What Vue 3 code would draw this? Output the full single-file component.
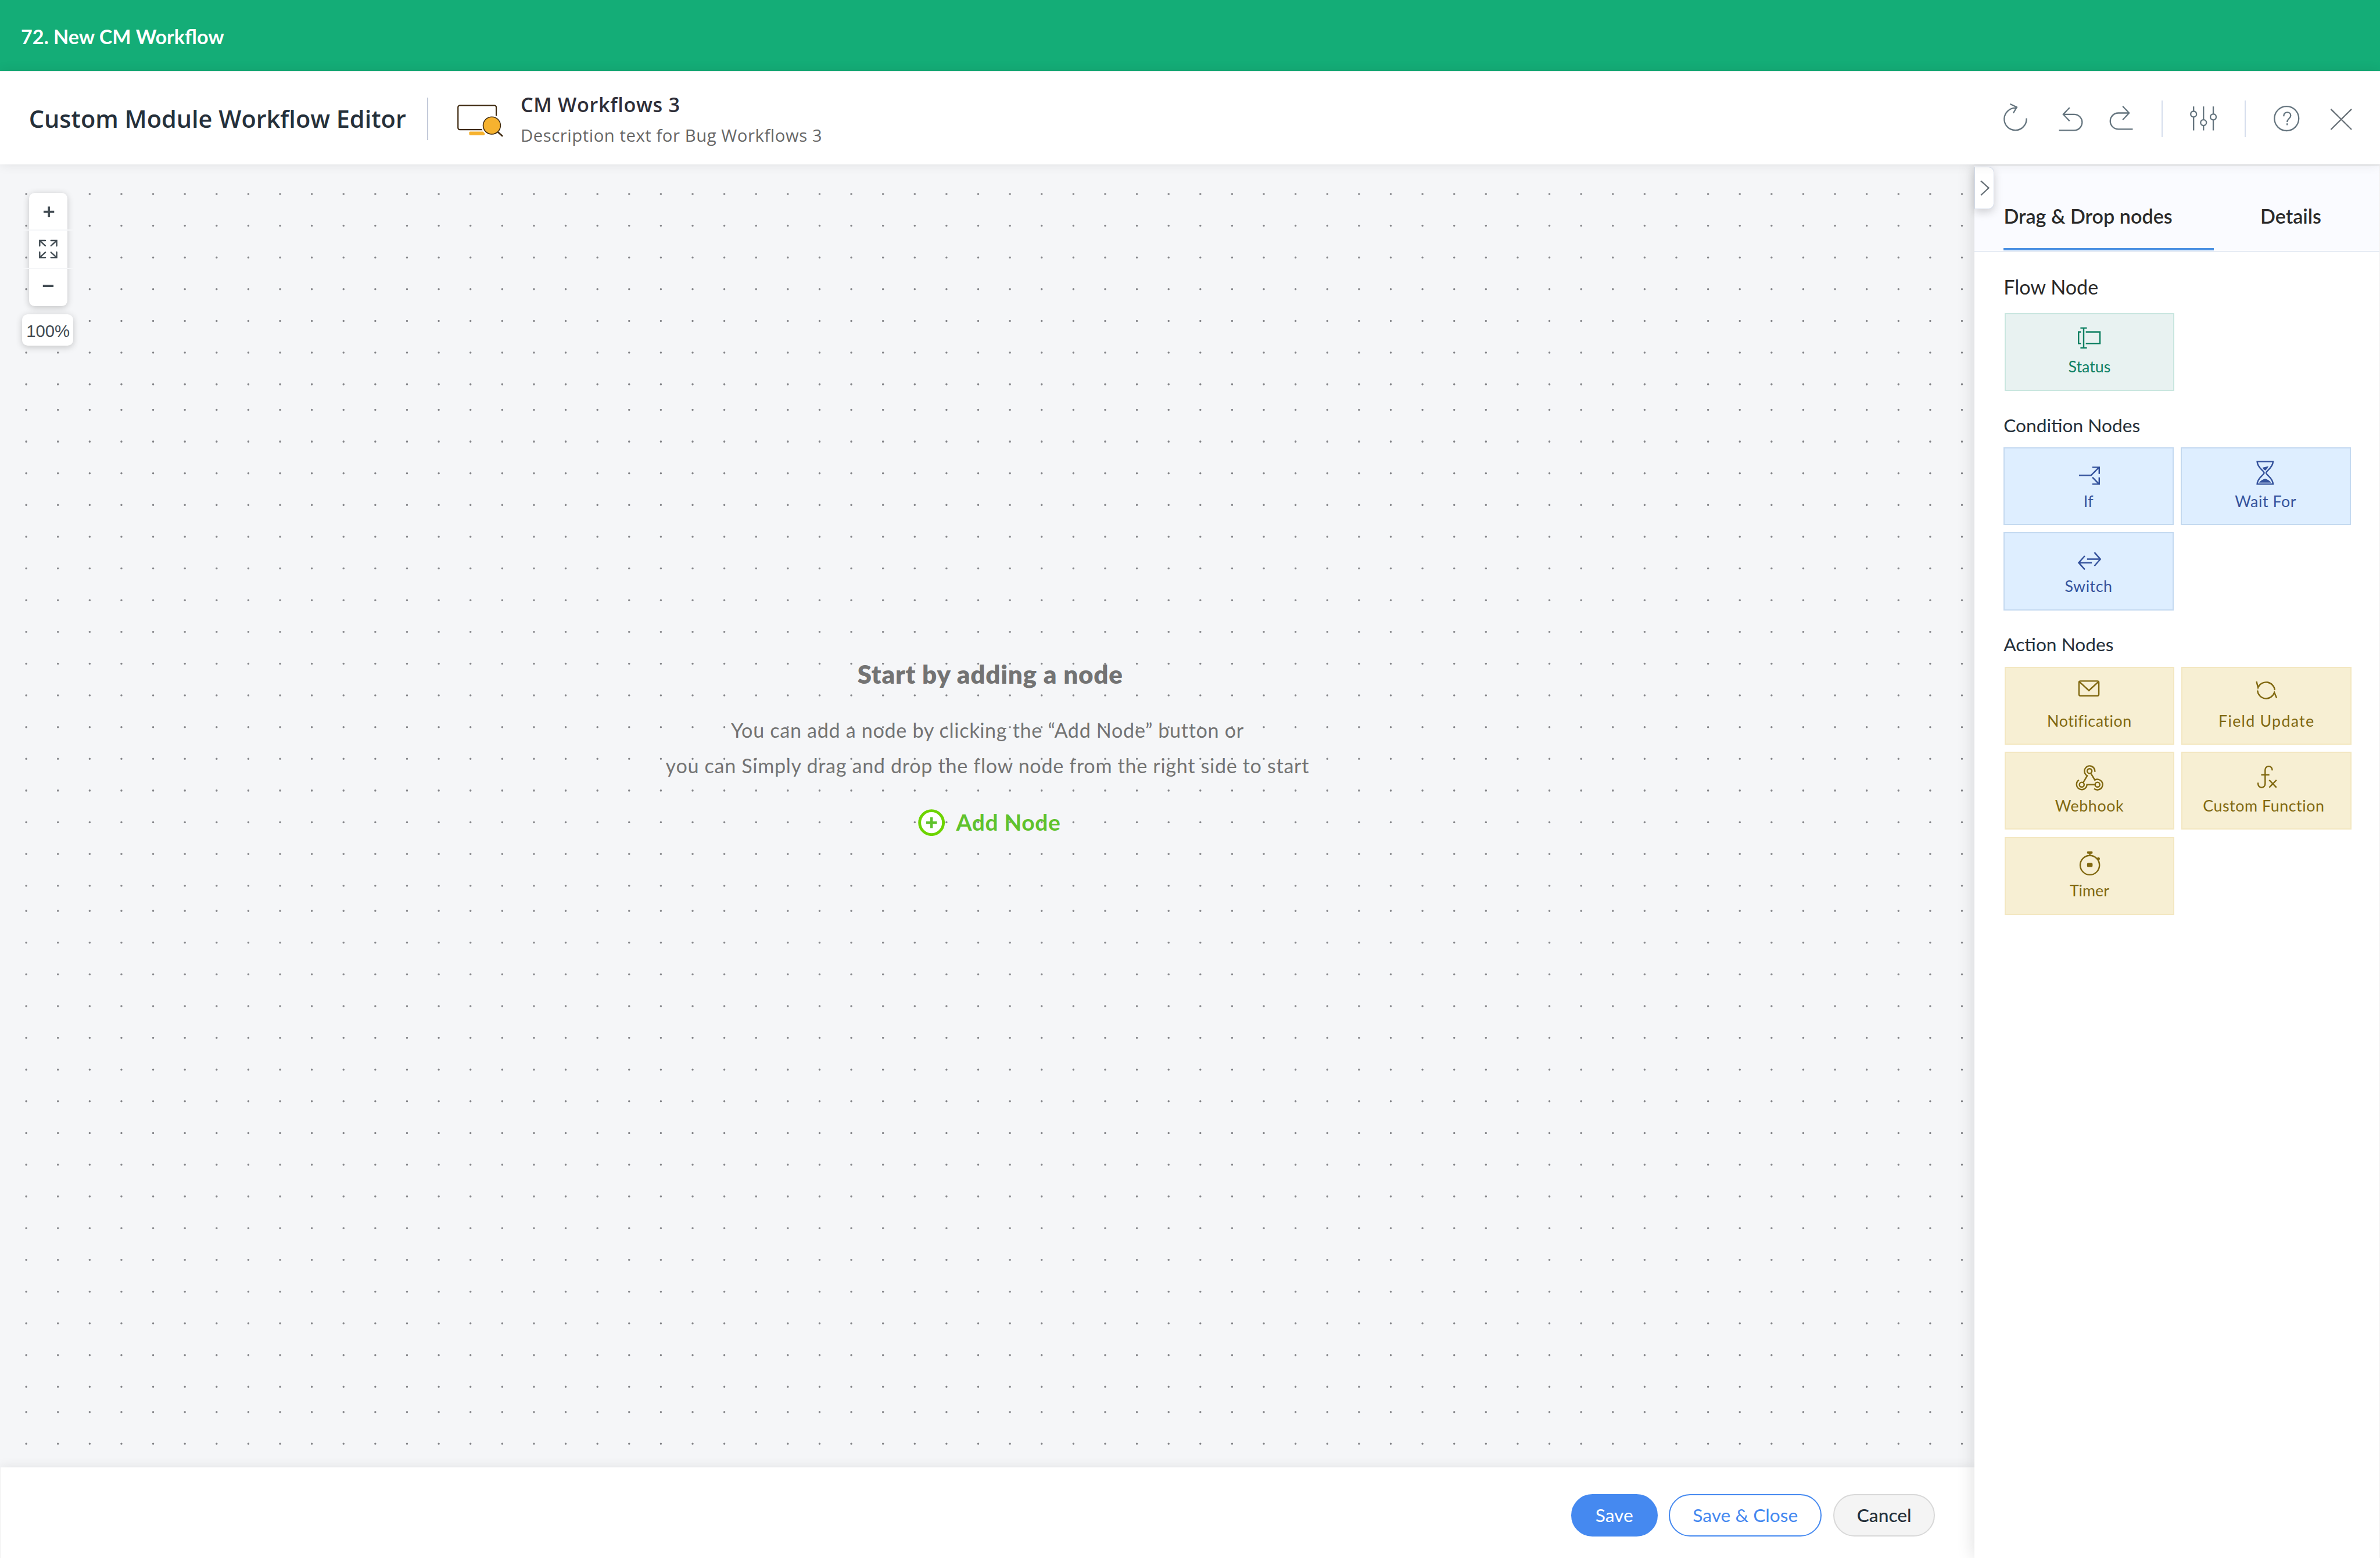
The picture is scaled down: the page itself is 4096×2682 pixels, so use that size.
<script setup>
import { ref, computed } from "vue";

const activeTab = ref("nodes");
const zoom = ref(100);

const tabs = [
    { id: "nodes", label: "Drag & Drop nodes" },
    { id: "details", label: "Details" },
];

const groups = [
    {
        name: "Flow Node",
        kind: "flow",
        nodes: [{ id: "status", label: "Status" }],
    },
    {
        name: "Condition Nodes",
        kind: "condition",
        nodes: [
            { id: "if", label: "If" },
            { id: "wait", label: "Wait For" },
            { id: "switch", label: "Switch" },
        ],
    },
    {
        name: "Action Nodes",
        kind: "action",
        nodes: [
            { id: "notification", label: "Notification" },
            { id: "update", label: "Field Update" },
            { id: "webhook", label: "Webhook" },
            { id: "function", label: "Custom Function" },
            { id: "timer", label: "Timer" },
        ],
    },
];

// the grid repeats in blocks, the last row of a block sits closer to the next one
const blocks = [
    { top: 20.9, rows: 7 },
    { top: 173.3, rows: 16 },
    { top: 527.1, rows: 16 },
    { top: 880.9, rows: 2 },
];

const dotRows = computed(() =>
    blocks.flatMap((b) =>
        Array.from({ length: b.rows }, (_, i) => b.top + i * 22.4),
    ),
);

function changeZoom(step) {
    zoom.value = Math.min(200, Math.max(10, zoom.value + step));
}
</script>

<template>
    <div class="page">
        <div class="banner">72. New CM Workflow</div>

        <header class="header">
            <h1>Custom Module Workflow Editor</h1>
            <span class="divider tall"></span>
            <svg class="logo" viewBox="1280 280 144 112">
                <rect x="1293.5" y="297.5" width="108" height="68" rx="5" fill="#fff" stroke="#3f2a10" stroke-width="3.6" />
                <rect x="1325" y="371" width="44" height="10.5" rx="3" fill="#f6b22f" />
                <circle cx="1389" cy="354" r="30" fill="#fff" />
                <path d="M1407 373L1418 383" stroke="#3f2a10" stroke-width="4.5" stroke-linecap="round" />
                <circle cx="1389" cy="354" r="24.5" fill="#f6b22f" stroke="#3f2a10" stroke-width="2.6" />
            </svg>
            <div class="info">
                <h2>CM Workflows 3</h2>
                <p>Description text for Bug Workflows 3</p>
            </div>

            <div class="tools">
                <svg viewBox="0 0 24 24">
                    <path d="M19.9 11.3A7.85 7.85 0 1 1 12.9 4.1M8.4 1.2L13.1 3.5L10.6 7.7" />
                </svg>
                <svg class="undo" viewBox="0 0 24 24">
                    <path d="M7 8.55H14.6A5.65 5.65 0 0 1 14.6 19.85H3.9M11.4 3.8L6.9 8.55L11.4 13.3" />
                </svg>
                <svg class="redo" viewBox="0 0 24 24">
                    <path d="M17.2 7.6H9.7A5.7 5.7 0 0 0 9.7 19H19.9M12.8 2.9L17.3 7.6L12.8 12.4" />
                </svg>
                <span class="divider"></span>
                <svg class="sliders" viewBox="0 0 24 24">
                    <path d="M5 3V6.3M5 10.5V19.9M12 3V12.3M12 16.5V19.9M18.9 3V8.3M18.9 12.5V19.9" />
                    <circle cx="5" cy="8.4" r="2.05" />
                    <circle cx="12" cy="14.4" r="2.05" />
                    <circle cx="18.9" cy="10.4" r="2.05" />
                </svg>
                <span class="divider second"></span>
                <svg class="help" viewBox="0 0 24 24">
                    <circle cx="12" cy="11.5" r="8.6" />
                    <path d="M10 9.9V9.5C10 8.1 11.1 7.1 12.5 7.1C13.9 7.1 14.9 8.1 14.9 9.4C14.9 11.3 12.4 11.7 12.4 13.9M12.4 14.9V16.2" />
                </svg>
                <svg class="close" viewBox="0 0 24 24">
                    <path d="M4.7 4.9L19.3 19.3M19.3 4.9L4.7 19.3" />
                </svg>
            </div>
        </header>

        <main class="body">
            <div class="left">
                <section class="canvas">
                    <svg class="dots" viewBox="0 0 1393.5 920">
                        <line v-for="y in dotRows" :key="y" x1="18.5" x2="1386" :y1="y" :y2="y" />
                    </svg>

                    <div class="controls">
                        <div class="zoomBox">
                            <button @click="changeZoom(10)">
                                <svg viewBox="0 0 27 26"><path class="bold" d="M10.25 13.4H17.75M14 9.6V17.2" /></svg>
                            </button>
                            <i></i>
                            <button @click="zoom = 100">
                                <svg viewBox="0 0 27 26">
                                    <path
                                        class="arrows"
                                        d="M11.5 7H7.5V10.8M7.7 7.2L11.5 10.7M15.5 7H19.5V10.8M19.3 7.2L15.5 10.7M11.5 19H7.5V15.2M7.7 18.8L11.5 15.3M15.5 19H19.5V15.2M19.3 18.8L15.5 15.3"
                                    />
                                </svg>
                            </button>
                            <i></i>
                            <button @click="changeZoom(-10)">
                                <svg viewBox="0 0 27 26"><path class="bold" d="M9.75 12H17.25" /></svg>
                            </button>
                        </div>
                        <div class="level">{{ zoom }}%</div>
                    </div>

                    <div class="empty">
                        <h3>Start by adding a node</h3>
                        <p>
                            You can add a node by clicking the “Add Node” button or<br />
                            you can Simply drag and drop the flow node from the right side to start
                        </p>
                        <button class="add">
                            <svg viewBox="0 0 19 19">
                                <circle cx="9.5" cy="9.5" r="8.4" />
                                <path d="M5.7 9.5H13.3M9.5 5.7V13.3" />
                            </svg>
                            Add Node
                        </button>
                    </div>
                </section>

                <footer class="footer">
                    <button class="btn save">Save</button>
                    <button class="btn saveClose">Save &amp; Close</button>
                    <button class="btn cancel">Cancel</button>
                </footer>
            </div>

            <aside class="panel">
                <button class="collapse">
                    <svg viewBox="0 0 14 30"><path d="M4.5 10L10.1 15L4.5 20.2" /></svg>
                </button>

                <nav class="tabs">
                    <button
                        v-for="tab in tabs"
                        :key="tab.id"
                        :class="{ active: tab.id === activeTab }"
                        @click="activeTab = tab.id"
                    >
                        {{ tab.label }}
                    </button>
                </nav>

                <div class="groups">
                    <section v-for="group in groups" :key="group.name" :class="group.kind">
                        <h4>{{ group.name }}</h4>
                        <div class="grid">
                            <div v-for="node in group.nodes" :key="node.id" class="node" :class="node.id" draggable="true">
                                <svg viewBox="0 0 40 30">
                                    <path
                                        v-if="node.id === 'status'"
                                        d="M16 10.5V24.5M13.7 10.5h4.6M13.7 24.5h4.6M14.1 13.35H12.4V21.45H14.1M17.5 13.35H27.5V21.45H17.5"
                                    />
                                    <path
                                        v-else-if="node.id === 'if'"
                                        d="M13.1 19.8H21.6L27.2 14.2M22.5 14.1H27.4V18.8M22.6 21.2L27.2 25.9M27.4 21.2V26H22.5"
                                    />
                                    <template v-else-if="node.id === 'wait'">
                                        <path
                                            d="M14.2 10.1H25.4C25.2 14.6 20.5 16.6 20.5 18.05C20.5 19.5 25.2 21.5 25.4 26H14.2C14.4 21.5 19.1 19.5 19.1 18.05C19.1 16.6 14.4 14.6 14.2 10.1Z"
                                        />
                                        <path class="fill" d="M15.6 24.9Q17 22.9 19.8 22.1Q22.6 22.9 24 24.9ZM17.9 14.4L22.2 13.3Q21.5 15.2 19.9 16.4Q18.4 15.6 17.9 14.4Z" />
                                    </template>
                                    <path
                                        v-else-if="node.id === 'switch'"
                                        d="M18.8 18.7H28M24 13.9L28.2 18.7L24 23.5M22.2 21.2H13M17.2 16.4L12.9 21.2L17.2 26"
                                    />
                                    <template v-else-if="node.id === 'notification'">
                                        <rect x="12.7" y="10" width="14" height="10.4" rx="1" />
                                        <path d="M13 10.5L19.7 16.7L26.4 10.5" />
                                    </template>
                                    <path
                                        v-else-if="node.id === 'update'"
                                        d="M12.9 10.3L14 14.6A6.15 6.15 0 0 1 25.8 16.4M13.6 16.6A6.1 6.1 0 0 0 25.5 18.1L27.1 21.9"
                                    />
                                    <g v-else-if="node.id === 'webhook'" class="hook" transform="translate(0 1.75) scale(0.0833)">
                                        <circle cx="242" cy="143" r="20" />
                                        <circle cx="176" cy="258" r="20" />
                                        <circle cx="309" cy="258" r="20" />
                                        <path
                                            d="M287 150A44.5 44.5 0 1 0 222 183L188 240M152 219A44 44 0 1 0 220 258H287M280 292A44.5 44.5 0 1 0 287 219L254 164"
                                        />
                                    </g>
                                    <path
                                        v-else-if="node.id === 'function'"
                                        d="M24 13.2V12.8A2.5 2.5 0 0 0 19 12.8V22.8A2.5 2.5 0 0 1 14 22.8V21.8M16.2 16.3H22M21.9 20L27 25.3M27 20L21.9 25.3"
                                    />
                                    <template v-else>
                                        <circle cx="20.35" cy="19.8" r="6.8" />
                                        <path d="M20.35 11.5V13" />
                                        <rect class="fill" x="18.4" y="10" width="3.9" height="1.8" rx="0.6" />
                                        <circle class="fill" cx="26.4" cy="15.3" r="1.05" />
                                        <rect class="fill" x="18.4" y="18.3" width="3.9" height="2.8" rx="0.7" />
                                    </template>
                                </svg>
                                <span>{{ node.label }}</span>
                            </div>
                        </div>
                    </section>
                </div>
            </aside>
        </main>
    </div>
</template>

<style>
/* 1rem = 10px of the 1680px wide layout */
html {
    font-size: calc(100vw / 168);
}

body {
    margin: 0;
    overflow: hidden;
}
</style>

<style scoped>
* {
    box-sizing: border-box;
    margin: 0;
}

button {
    padding: 0;
    border: none;
    background: none;
    color: inherit;
    font: inherit;
}

svg {
    display: block;
    flex: none;
    fill: none;
}

.page {
    display: flex;
    flex-direction: column;
    height: 100vh;
    background-color: white;
    font-family: "Lato", sans-serif;
}

.banner {
    height: 5rem;
    padding: 0.1rem 0 0 1.48rem;
    background-color: #14ad77;
    color: white;
    font-size: 1.4rem;
    font-weight: 700;
    line-height: 5rem;
}

.header {
    display: flex;
    align-items: center;
    position: relative;
    z-index: 3;
    height: 6.6rem;
    padding: 0.12rem 1.54rem 0 2.04rem;
    border-top: 0.1rem solid #f5f5f5;
    background-color: white;
    box-shadow: 0 0 0.8rem rgba(0, 0, 0, 0.09);
    font-family: "Open Sans", sans-serif;
}

h1 {
    width: 28.11rem;
    padding-bottom: 0.05rem;
    color: #25303a;
    font-size: 1.7rem;
    font-weight: 600;
    white-space: nowrap;
}

.divider {
    width: 0.09rem;
    height: 2.6rem;
    margin-left: 1.6rem;
    background-color: #d5deed;
}

.divider.tall {
    height: 3rem;
    margin-left: 0;
    background-color: #c3cad9;
}

.divider.second {
    margin-left: 1.7rem;
}

.logo {
    width: 3.6rem;
    height: 2.8rem;
    margin: 0 1.15rem 0 1.76rem;
}

.info {
    padding-top: 0.15rem;
}

h2 {
    color: #2e2e38;
    font-size: 1.4rem;
    font-weight: 600;
    line-height: 2rem;
    letter-spacing: 0.029rem;
}

.info p {
    margin-top: 0.17rem;
    color: #666;
    font-size: 1.2rem;
    line-height: 2rem;
    letter-spacing: 0.023rem;
}

.tools {
    display: flex;
    align-items: center;
    margin-left: auto;
}

.tools svg {
    width: 2.4rem;
    height: 2.4rem;
    stroke: #64747e;
    stroke-width: 0.95;
}

.tools .undo {
    margin-left: 1.5rem;
}

.tools .redo {
    margin-left: 1.2rem;
}

.tools .sliders {
    margin-left: 1.7rem;
}

.tools .help {
    margin-left: 1.66rem;
}

.tools .close {
    margin-left: 1.46rem;
    stroke: #666f76;
}

.body {
    display: flex;
    flex: 1;
    min-height: 0;
}

.left {
    display: flex;
    flex-direction: column;
    flex: 1;
}

.canvas {
    position: relative;
    height: 92rem;
    padding-top: 34.8rem;
    background-color: #f5f6f8;
}

.dots {
    position: absolute;
    top: 0;
    left: 0;
    width: 100%;
    height: 100%;
    stroke: #85868a;
    stroke-width: 1.45;
    stroke-linecap: round;
    stroke-dasharray: 0 22.4;
}

.controls {
    position: absolute;
    top: 2rem;
    left: 1.55rem;
    width: 3.6rem;
}

.zoomBox {
    width: 2.7rem;
    margin: 0 0 0.6rem 0.5rem;
    border-radius: 0.4rem;
    background-color: white;
    box-shadow: 0 0.1rem 0.5rem rgba(0, 0, 0, 0.2);
}

.zoomBox button {
    display: block;
}

.zoomBox svg {
    width: 2.7rem;
    height: 2.6rem;
}

.zoomBox i {
    display: block;
    height: 0.1rem;
    margin: 0 -0.4rem;
    background-color: #f5f6f8;
}

.bold {
    stroke: #434d54;
    stroke-width: 1.5;
}

.arrows {
    stroke: #434d54;
    stroke-width: 1;
    stroke-linecap: round;
}

.level {
    height: 2.2rem;
    padding-left: 0.08rem;
    border-radius: 0.4rem;
    background-color: white;
    box-shadow: 0 0.1rem 0.5rem rgba(0, 0, 0, 0.2);
    color: #434d54;
    font: 1.2rem/2.42rem "Liberation Sans", sans-serif;
    text-align: center;
}

.empty {
    display: flex;
    flex-direction: column;
    align-items: center;
    position: relative;
    color: #737373;
    text-align: center;
}

h3 {
    padding-left: 0.45rem;
    font-size: 1.8rem;
    font-weight: 800;
    line-height: 2.4rem;
    letter-spacing: 0.033rem;
}

.empty p {
    margin: 1.53rem 0 1.55rem;
    padding-left: 0.05rem;
    font-size: 1.4rem;
    line-height: 2.49rem;
    letter-spacing: 0.028rem;
}

.add {
    display: flex;
    align-items: center;
    gap: 0.78rem;
    padding-left: 0.33rem;
    color: #5fc22c;
    font-size: 1.6rem;
    font-weight: 700;
    line-height: 2.44rem;
    letter-spacing: 0.024rem;
}

.add svg {
    width: 1.9rem;
    height: 1.9rem;
}

.add circle {
    fill: white;
    stroke: #6dd400;
    stroke-width: 2;
}

.add path {
    stroke: #5fc22c;
    stroke-width: 1.8;
}

.footer {
    display: flex;
    align-items: center;
    justify-content: flex-end;
    flex: 1;
    gap: 0.8rem;
    position: relative;
    padding: 0.35rem 2.75rem 0 0;
    border-left: 0.05rem solid #f1f1f1;
    background-color: white;
    box-shadow: 0 0 0.8rem rgba(0, 0, 0, 0.09);
}

.btn {
    height: 3rem;
    border: 0.1rem solid #4589f0;
    border-radius: 1.5rem;
    font-size: 1.3rem;
}

.save {
    width: 6.1rem;
    background-color: #4589f0;
    color: white;
}

.saveClose {
    width: 10.8rem;
    color: #4589f0;
}

.cancel {
    width: 7.2rem;
    border-color: #d8d8d8;
    background-color: #f4f4f4;
    color: #25303a;
    font-weight: 500;
}

.panel {
    position: relative;
    z-index: 2;
    width: 28.65rem;
    border-top: 0.1rem solid #e4e5e7;
    border-right: 0.05rem solid #f1f1f1;
    background-color: white;
    box-shadow: 0 0 1.2rem rgba(0, 0, 0, 0.14);
}

.collapse {
    position: absolute;
    top: 0.09rem;
    left: 0;
    width: 1.4rem;
    height: 3rem;
    border: 0.05rem solid #d2dbea;
    border-radius: 0 0.4rem 0.4rem 0;
    background-color: white;
    box-shadow: 0 0.2rem 0.6rem rgba(0, 0, 0, 0.18);
}

.collapse svg {
    width: 1.4rem;
    height: 3rem;
    margin: -0.05rem 0 0 -0.03rem;
    stroke: #666f76;
    stroke-width: 0.9;
}

.tabs {
    display: flex;
    align-items: flex-end;
    gap: 3.29rem;
    height: 6.07rem;
    padding: 0 0 0.04rem 2.09rem;
    border-bottom: 0.05rem solid #d5deed;
    background-color: #fafbff;
    color: #2a2a2a;
    font-size: 1.4rem;
    font-weight: 600;
    line-height: 4.45rem;
}

.tabs button {
    border-bottom: 0.2rem solid transparent;
    text-align: left;
}

.tabs .active {
    width: 14.82rem;
    border-color: #4a90e2;
}

.groups {
    display: flex;
    flex-direction: column;
    gap: 1.4rem;
    padding: 1.5rem 0 0 2.08rem;
}

h4 {
    margin-bottom: 0.57rem;
    padding-top: 0.03rem;
    color: #25303a;
    font-size: 1.3rem;
    font-weight: 400;
    line-height: 2rem;
}

.flow h4 {
    margin-bottom: 0.81rem;
    color: #2a2a2a;
    font-size: 1.4rem;
}

.grid {
    display: grid;
    grid-template-columns: 12rem 12rem;
    gap: 0.5rem;
}

.flow .grid,
.action .grid {
    margin-left: 0.06rem;
}

.node {
    display: flex;
    flex-direction: column;
    align-items: center;
    height: 5.5rem;
    border: 0.1rem solid;
    font-size: 1.1rem;
    letter-spacing: 0.023rem;
}

.node svg {
    width: 4rem;
    height: 3rem;
    margin: -0.08rem 0 0.1rem;
    stroke: currentColor;
    stroke-width: 1;
}

.node span {
    line-height: 1.45rem;
}

.fill {
    fill: currentColor;
    stroke: none;
}

.hook {
    stroke-width: 12;
}

.flow .node {
    border-color: #c9e6df;
    background-color: #e8f2f1;
    color: #0e8062;
}

.condition .node {
    border-color: #c4d9f0;
    background-color: #deeeff;
    color: #34529c;
}

.action .node {
    border-color: #f3e7c1;
    background-color: #f7efd3;
    color: #806810;
}

.status,
.timer {
    letter-spacing: 0;
}

.update {
    letter-spacing: 0.052rem;
}

.function span {
    padding-right: 0.4rem;
}
</style>
